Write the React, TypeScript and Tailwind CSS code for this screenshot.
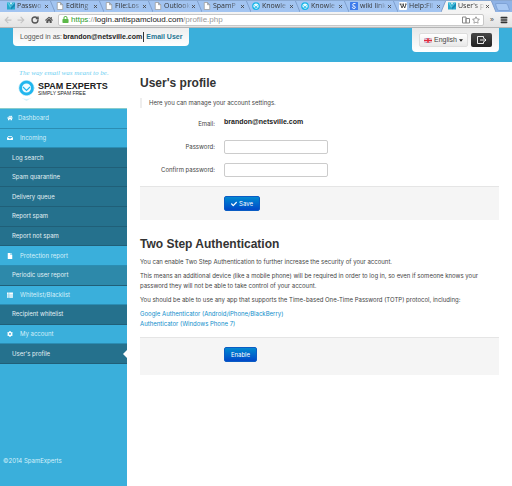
import React, { useState } from 'react';
import clsx from 'clsx';
import { FaArrowLeft, FaArrowRight, FaCheck, FaCog, FaHome, FaInbox, FaFile, FaThList, FaLock, FaRegStar } from 'react-icons/fa';
import { Menu, RotateCw, X } from 'lucide-react';

type Favicon = 'spam' | 'page' | 'experts' | 'google' | 'wiki';

const tabs: { title: string; icon: Favicon; active?: boolean }[] = [
  { title: 'Passwo', icon: 'spam' },
  { title: 'Editing', icon: 'page' },
  { title: 'File:Los', icon: 'page' },
  { title: 'Outlook', icon: 'page' },
  { title: 'SpamP', icon: 'page' },
  { title: 'Knowle', icon: 'experts' },
  { title: 'Knowle', icon: 'experts' },
  { title: 'wiki link', icon: 'google' },
  { title: 'Help:Fil', icon: 'wiki' },
  { title: "User's p", icon: 'spam', active: true },
];

const menu: { label: string; icon?: React.ElementType; light?: boolean; active?: boolean }[] = [
  { label: 'Dashboard', icon: FaHome },
  { label: 'Incoming', icon: FaInbox },
  { label: 'Log search' },
  { label: 'Spam quarantine' },
  { label: 'Delivery queue' },
  { label: 'Report spam' },
  { label: 'Report not spam' },
  { label: 'Protection report', icon: FaFile },
  { label: 'Periodic user report', light: true },
  { label: 'Whitelist/Blacklist', icon: FaThList },
  { label: 'Recipient whitelist' },
  { label: 'My account', icon: FaCog },
  { label: "User's profile", active: true },
];

function TabIcon({ icon }: { icon: Favicon }) {
  return (
    <svg viewBox="0 0 16 16" className="h-2 w-2 shrink-0" aria-hidden="true">
      {icon === 'spam' && (
        <>
          <path d="M0 1h16v14H0z" fill="#25a9cd" />
          <path d="M5 1h6l-3 5z" fill="#d8f3fa" />
          <path d="M0 1h3l5 8 5-8h3l-9 12z" fill="#5ccbe2" />
          <path d="M7 11l9-9v6l-8 7z" fill="#1687b5" />
        </>
      )}
      {icon === 'page' && (
        <path d="M2.500 1H9l4.500 4.500V15h-11zM9 1v4.500h4.500" fill="#fff" stroke="#999" strokeWidth="1.500" />
      )}
      {icon === 'experts' && (
        <>
          <circle cx="8" cy="8" r="6.500" fill="#e8fbff" stroke="#16b4e8" strokeWidth="2.500" />
          <path d="M4.500 7L8 10l3.500-3M5 11h6" fill="none" stroke="#16b4e8" strokeWidth="1.500" />
        </>
      )}
      {icon === 'google' && (
        <>
          <rect width="16" height="16" rx="1" fill="#3f7ceb" />
          <path d="M11 3H8a2.500 2.500 0 100 5c3 0 4 5 0 5s-4-3-1-3.500" fill="none" stroke="#fff" strokeWidth="1.800" />
        </>
      )}
      {icon === 'wiki' && (
        <>
          <rect width="16" height="16" rx="2" fill="#fff" />
          <path d="M1 4h4M7 4h3M12 4h3M3 4l3 8 3-7M7.500 4l4 8L14 4" fill="none" stroke="#222" strokeWidth="1.500" />
        </>
      )}
    </svg>
  );
}

function BrowserBar() {
  return (
    <header>
      <div className="flex h-3 items-end overflow-hidden border-t border-[#8aa9d2] bg-[#8fb3e6] font-['Open_Sans',sans-serif]">
        {tabs.map((tab, i) => (
          <div
            key={i}
            className={clsx(
              'relative flex h-3 w-[49px] shrink-0 items-center pl-[7px]',
              tab.active ? 'bg-[#f3f3f3]' : 'bg-[#a2c4f1]'
            )}
          >
            <TabIcon icon={tab.icon} />
            <span className="ml-[2px] w-[27px] text-[7px] leading-3 whitespace-nowrap text-[#333] [mask-image:linear-gradient(to_right,#000_60%,transparent)]">
              {tab.title}
            </span>
            <X className="h-[5px] w-[5px] shrink-0 text-[#444]" strokeWidth={4} />
            <svg viewBox="0 0 6 12" className="absolute top-0 -right-[6px] z-10 h-3 w-[6px]" aria-hidden="true">
              {tab.active && <path d="M0 0h1l5 12H0z" fill="#f3f3f3" />}
              {i === 8 && <path d="M0 0h5L0 12z" fill="#a2c4f1" />}
              <path d={i === 8 ? 'M5 0L0 12' : 'M1 0l5 12'} stroke="#7f9fcd" fill="none" />
            </svg>
          </div>
        ))}
        <button type="button" aria-label="New tab" className="ml-[6px] h-2 w-[13px] shrink-0 self-center skew-x-[20deg] rounded-[2px] border border-[#7fa3d6] bg-[#a9c9f3]" />
      </div>
      <div className="flex h-4 items-center border-b border-[#b5b5b5] bg-linear-to-b from-[#f4f4f4] to-[#e3e3e3] px-1">
        <FaArrowLeft className="mr-[5px] size-2 text-[#c4c4c4]" />
        <FaArrowRight className="mr-[6px] size-2 text-[#c4c4c4]" />
        <RotateCw className="mr-[6px] size-2 text-[#555]" strokeWidth={4} />
        <FaHome className="mr-[5px] size-2 text-[#555]" />
        <div className="flex h-3 flex-1 items-center rounded-[2px] border border-[#c8c8c8] bg-white px-[3px]">
          <FaLock className="mr-[2px] size-[7px] text-[#5cb849]" />
          <span className="flex-1 font-['Liberation_Sans',sans-serif] text-[8px] leading-3 text-[#999]">
            <span className="text-[#2a9b2a]">https</span>://<span className="text-[#222]">login.antispamcloud.com</span>/profile.php
          </span>
          <svg viewBox="0 0 16 16" className="mr-[2px] size-2" fill="#fff" stroke="#888" strokeWidth="2" aria-hidden="true">
            <path d="M1 2h7v12H1zM8 5h7v9H8z" />
          </svg>
          <FaRegStar className="size-2 text-[#888]" />
        </div>
        <span className="mx-[6px] text-[7px] leading-3 text-[#444]">»</span>
        <Menu className="size-2 text-[#333]" strokeWidth={5} />
      </div>
    </header>
  );
}

function AccountBar() {
  return (
    <div className="flex h-[34px] items-start justify-between bg-[#3aafdb] px-[13px]">
      <div className="flex h-[18px] items-center rounded-b-[4px] bg-linear-to-b from-[#eee] to-white px-[7px] text-[7px] leading-[10px]">
        <span className="text-[#555]">Logged in as:</span>
        <b className="ml-[1px] text-[#222]">brandon@netsville.com</b>
        <a href="#user" className="ml-[1px] border-l border-[#333] pl-[2px] font-bold text-[#1f7492]">Email User</a>
      </div>
      <div className="flex h-6 items-start gap-[3px] rounded-b-[4px] bg-linear-to-b from-[#e8e8e8] to-white px-[7px] pt-[5px]">
        <button type="button" className="flex h-[14px] w-[49px] items-center justify-center gap-[2px] rounded-[2px] border border-[#ddd] bg-linear-to-b from-white to-[#e8e8e8] text-[7px] leading-[10px]">
          <svg viewBox="0 0 16 10" className="h-[5px] w-2" aria-hidden="true">
            <path d="M0 0h16v10H0z" fill="#5263ad" />
            <path d="M0 0l16 10M16 0L0 10" stroke="#f3c7cf" strokeWidth="2.500" />
            <path d="M8 0v10M0 5h16" stroke="#fff" strokeWidth="5" />
            <path d="M8 0v10M0 5h16" stroke="#e0283a" strokeWidth="3" />
          </svg>
          English
          <svg viewBox="0 0 8 5" className="h-[3px] w-1" aria-hidden="true"><path d="M0 0h8L4 5z" fill="#222" /></svg>
        </button>
        <button type="button" aria-label="Log out" className="flex h-[14px] w-[21px] items-center justify-center rounded-[2px] bg-linear-to-b from-[#484848] to-[#222] text-white">
          <svg viewBox="0 0 20 16" className="h-2 w-[10px]" fill="none" stroke="currentColor" strokeWidth="1.800" aria-hidden="true">
            <path d="M13 5V1H1v14h12v-4M6 8h12M14.500 4.500L18 8l-3.500 3.500" />
          </svg>
        </button>
      </div>
    </div>
  );
}

function Logo() {
  return (
    <svg viewBox="0 0 127 46" className="h-[46px] w-full" role="img" aria-label="Spam Experts">
      <text x="19" y="13" fontFamily="Liberation Serif, serif" fontStyle="italic" fontSize="7" fill="#6fd0f2">
        The way email was meant to be.
      </text>
      <circle cx="26.500" cy="26" r="6" fill="#effbff" stroke="#20b6ee" strokeWidth="3" />
      <circle cx="26.500" cy="26" r="7.500" fill="none" stroke="#8bdcf8" strokeWidth="1" strokeDasharray="1 1" />
      <path d="M23 25l3.500 3.500L30 25" fill="none" stroke="#20b6ee" strokeWidth="1.200" />
      <path d="M20 35q6.500 4 13 0l-6.500 4z" fill="#d5f2fc" />
      <text x="38" y="27" fontFamily="Liberation Sans, sans-serif" fontWeight="bold" fontSize="9" fill="#222">
        SPAM EXPERTS
      </text>
      <text x="38" y="33" fontFamily="Liberation Sans, sans-serif" fontSize="5" fill="#222">
        SIMPLY SPAM FREE
      </text>
    </svg>
  );
}

function Sidebar() {
  return (
    <aside className="flex w-[127px] shrink-0 flex-col bg-[#3aafdb]">
      <div className="bg-white">
        <Logo />
      </div>
      <nav className="grid h-[256px] auto-rows-fr border-t border-[#8cc]">
        {menu.map(({ label, icon: Icon, light, active }) => (
          <a
            key={label}
            href="#menu"
            className={clsx(
              'relative flex items-center border-b text-[6px] leading-[10px]',
              Icon && 'border-[#2b8db3] bg-[#3aafdb] pl-[7px] text-[#d5f0fa]',
              !Icon && 'border-[#205f78] pl-3 text-[#e3f0f4]',
              !Icon && (light ? 'bg-[#2d89aa]' : 'bg-[#25718d]')
            )}
          >
            {Icon && <Icon className={clsx('size-[6px] text-white', label === 'Dashboard' ? 'mr-[5px]' : 'mr-[7px]')} />}
            {label}
            {active && (
              <svg viewBox="0 0 4 8" className="absolute top-[6px] right-0 h-2 w-1" aria-hidden="true">
                <path d="M4 0v8L0 4z" fill="#fff" />
              </svg>
            )}
          </a>
        ))}
      </nav>
      <p className="mt-auto mb-5 pl-[3px] text-[6px] leading-[10px] text-[#d5f0fa]">©2014 SpamExperts</p>
    </aside>
  );
}

const primaryButton =
  'flex h-[15px] items-center justify-center gap-[2px] rounded-[2px] border border-[#0a5cc4] bg-linear-to-b from-[#0888d0] to-[#0447c8] text-[6px] leading-[10px] text-white';

function ProfileForm() {
  const [password, setPassword] = useState('');
  const [confirm, setConfirm] = useState('');

  return (
    <form onSubmit={(e) => e.preventDefault()}>
      <div className="flex h-[14px] gap-[9px]">
        <span className="w-[75px] pt-[2px] text-right">Email:</span>
        <b className="font-['Liberation_Sans',sans-serif] text-[7px] text-[#222]">brandon@netsville.com</b>
      </div>
      <div className="mt-[9px] flex items-center gap-[9px]">
        <label htmlFor="password" className="w-[75px] text-right">Password:</label>
        <input
          id="password"
          type="password"
          value={password}
          onChange={(e) => setPassword(e.target.value)}
          className="h-[14px] w-[104px] rounded-[2px] border border-[#ccc] bg-white px-1"
        />
      </div>
      <div className="mt-[9px] flex items-center gap-[9px]">
        <label htmlFor="confirm" className="w-[75px] text-right">Confirm password:</label>
        <input
          id="confirm"
          type="password"
          value={confirm}
          onChange={(e) => setConfirm(e.target.value)}
          className="h-[14px] w-[104px] rounded-[2px] border border-[#ccc] bg-white px-1"
        />
      </div>
      <div className="mt-[9px] h-[34px] border-t border-[#e5e5e5] bg-[#f5f5f5] pt-[9px] pl-[84px]">
        <button type="submit" className={clsx(primaryButton, 'w-9')}>
          <FaCheck className="size-[6px]" />
          Save
        </button>
      </div>
    </form>
  );
}

export default function App() {
  return (
    <div className="flex min-h-screen flex-col bg-white font-['Liberation_Sans',Arial,sans-serif] text-[#444]">
      <BrowserBar />
      <AccountBar />
      <div className="flex flex-1 font-['Inter',sans-serif]">
        <Sidebar />
        <main className="min-w-0 flex-1 pt-[13px] pr-[13px] pl-[13px] text-[6px] leading-[10px]">
          <h1 className="font-['Liberation_Sans',sans-serif] text-[12px] leading-4 font-bold text-[#333]">User's profile</h1>
          <p className="mt-[7px] mb-[9px] border-l-2 border-[#eee] pl-[7px]">Here you can manage your account settings.</p>
          <ProfileForm />
          <section className="mt-4">
            <h2 className="font-['Liberation_Sans',sans-serif] text-[12px] leading-4 font-bold text-[#333]">Two Step Authentication</h2>
            <div className="mt-[5px] space-y-[4px]">
              <p>You can enable Two Step Authentication to further increase the security of your account.</p>
              <p>
                This means an additional device (like a mobile phone) will be required in order to log in, so even if someone
                knows your password they will not be able to take control of your account.
              </p>
              <p>You should be able to use any app that supports the Time-based One-Time Password (TOTP) protocol, including:</p>
              <p className="text-[#0e8ecb]">
                <a href="#google">Google Authenticator (Android/iPhone/BlackBerry)</a>
                <br />
                <a href="#windows">Authenticator (Windows Phone 7)</a>
              </p>
            </div>
            <div className="mt-2 h-[38px] border-t border-[#e5e5e5] bg-[#f5f5f5] pt-[9px] pl-[84px]">
              <button type="button" className={clsx(primaryButton, 'w-[33px]')}>Enable</button>
            </div>
          </section>
        </main>
      </div>
    </div>
  );
}
